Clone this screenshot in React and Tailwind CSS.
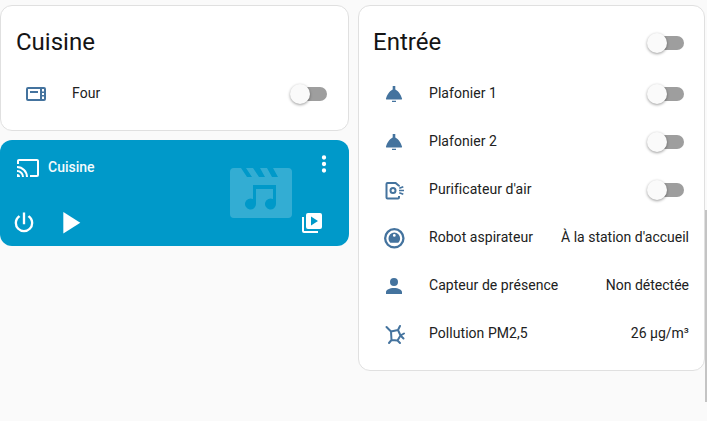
import React from 'react';

const font = { fontFamily: 'Roboto, sans-serif' };

// mdi style icon wrapper
const Icon = ({ d, size = 24, viewBox = '0 0 24 24', height, className = '' }) => (
  <svg width={size} height={height || size} viewBox={viewBox} className={className} fill="currentColor">
    <path d={d} fillRule="evenodd" />
  </svg>
);

const Molecule = () => (
  <svg width="24" height="24" viewBox="0 0 24 24" fill="none" stroke="currentColor" strokeWidth="2" strokeLinecap="round" strokeLinejoin="round">
    <path d="M9 9.5L16 8L18.5 13.5L15.5 18.5L9.5 18ZM9 9.5L4.5 5M16 8L18 4M18.5 13.5L22 11.5M18.5 13.5L21.5 16.5M15.5 18.5L18 21M9.5 18L7 21" />
  </svg>
);

const paths = {
  oven: 'M4 5H20A2 2 0 0 1 22 7V17A2 2 0 0 1 20 19H4A2 2 0 0 1 2 17V7A2 2 0 0 1 4 5M4 7V17H16V7H4M18 7V9.5H20V7H18M18 11V13H20V11H18M18 14.5V17H20V14.5H18M6 9H14V11H6V9Z',
  light: 'M10.7 4H13.3V7.5C16.5 9 19 13 20 16.5C20.2 17.2 19.8 17.5 19.3 17.5H4.7C4.2 17.5 3.8 17.2 4 16.5C5 13 7.5 9 10.7 7.5V4M10 18.7H14V20H10V18.7Z',
  purifier: 'M5.5 4H14L18 7.5V8.5H16V8.3L13.2 6H5.5V19.5H16V18H18V19.5A2 2 0 0 1 16 21.5H5.5A2 2 0 0 1 3.5 19.5V6A2 2 0 0 1 5.5 4M11 9A3.5 3.5 0 1 1 11 16A3.5 3.5 0 1 1 11 9M11 11A1.5 1.5 0 1 0 11 14A1.5 1.5 0 1 0 11 11M17 9.5L21 8L21.6 9.5L17.6 11L17 9.5M17 11.7H22V13.3H17V11.7M17.6 14L21.6 15.5L21 17L17 15.5L17.6 14Z',
  robot: 'M12.3 2A10.3 10.3 0 0 1 22.6 12.3A10.3 10.3 0 0 1 2 12.3A10.3 10.3 0 0 1 12.3 2M12.3 4.3A8 8 0 0 0 4.3 12.3A8 8 0 0 0 20.3 12.3A8 8 0 0 0 12.3 4.3M12.3 6.5A5.8 5.8 0 0 1 18.1 12.3C18.1 14 17.5 15.6 16.3 16.8H8.3C7.1 15.6 6.5 14 6.5 12.3A5.8 5.8 0 0 1 12.3 6.5M12.3 8A1.4 1.4 0 1 0 12.3 10.8A1.4 1.4 0 1 0 12.3 8Z',
  person: 'M12,4A4,4 0 0,1 16,8A4,4 0 0,1 12,12A4,4 0 0,1 8,8A4,4 0 0,1 12,4M12,14C16.42,14 20,15.79 20,18V20H4V18C4,15.79 7.58,14 12,14Z',
  cast: 'M1,10V12A9,9 0 0,1 10,21H12C12,14.92 7.07,10 1,10M1,14V16A5,5 0 0,1 6,21H8A7,7 0 0,0 1,14M1,18V21H4A3,3 0 0,0 1,18M21,3H3C1.89,3 1,3.89 1,5V8H3V5H21V19H14V21H21A2,2 0 0,0 23,19V5C23,3.89 22.1,3 21,3Z',
  dots: 'M12,16A2,2 0 0,1 14,18A2,2 0 0,1 12,20A2,2 0 0,1 10,18A2,2 0 0,1 12,16M12,10A2,2 0 0,1 14,12A2,2 0 0,1 12,14A2,2 0 0,1 10,12A2,2 0 0,1 12,10M12,4A2,2 0 0,1 14,6A2,2 0 0,1 12,8A2,2 0 0,1 10,6A2,2 0 0,1 12,4Z',
  power: 'M16.56,5.44L15.11,6.89C16.84,7.94 18,9.83 18,12A6,6 0 0,1 12,18A6,6 0 0,1 6,12C6,9.83 7.16,7.94 8.88,6.88L7.44,5.44C5.36,6.88 4,9.28 4,12A8,8 0 0,0 12,20A8,8 0 0,0 20,12C20,9.28 18.64,6.88 16.56,5.44M13,3H11V13H13V3Z',
  play: 'M8,5.14V19.14L19,12.14L8,5.14Z',
  playlist: 'M4 6H2V20A2 2 0 0 0 4 22H18V20H4V6M20 2H8A2 2 0 0 0 6 4V16A2 2 0 0 0 8 18H20A2 2 0 0 0 22 16V4A2 2 0 0 0 20 2M11 5.5L18 10L11 14.5V5.5Z',
  clapper: 'M4 0H11L17 9H22L16 0H23L29 9H35L30 0H37L42 9H48L43 0H58A4 4 0 0 1 62 4V46A4 4 0 0 1 58 50H4A4 4 0 0 1 0 46V4A4 4 0 0 1 4 0ZM23 17H46V36A5.5 5.5 0 1 1 43 31.1V21H26V36A5.5 5.5 0 1 1 23 31.1Z',
};

const Toggle = () => (
  <div className="relative w-[34px] h-[14px] rounded-full bg-[#9e9e9e] shrink-0">
    <div className="absolute left-[-3px] top-[-3px] w-5 h-5 rounded-full bg-[#fafafa] shadow-[0_1px_3px_rgba(0,0,0,0.4)]" />
  </div>
);

const Row = ({ icon, glyph, name, value, nameGap = 'ml-4', togglePad = 'pr-[5px]' }) => (
  <div className="flex items-center h-12">
    <div className="w-10 flex justify-center text-[#44739e] shrink-0">
      {glyph || <Icon d={icon} />}
    </div>
    <div className={`${nameGap} flex-1 text-sm tracking-[0.05px] text-[#212121] pb-[3px] whitespace-nowrap`}>{name}</div>
    {value
      ? <div className="text-sm text-[#212121] pb-[3px] whitespace-nowrap">{value}</div>
      : <div className={togglePad}><Toggle /></div>}
  </div>
);

const Card = ({ title, toggle, titlePad = 'pl-[15px]', className = '', children }) => (
  <div className={`bg-white border border-[#e0e0e0] rounded-xl ${className}`}>
    <div className={`flex items-center justify-between h-[63px] pt-[8px] ${titlePad} pr-[20px]`}>
      <div className="text-2xl text-[#141414]">{title}</div>
      {toggle && <div className="mt-[2px]"><Toggle /></div>}
    </div>
    <div className="px-[15px] mt-[1px]">{children}</div>
  </div>
);

export default function App() {
  return (
    <div className="relative min-h-screen bg-[#fafafa] overflow-hidden" style={font}>
      <div className="flex items-start gap-[9px] pt-[5px]">
        <div className="w-[349px] flex flex-col gap-[9px]">
          <Card title="Cuisine" className="h-[126px]">
            <Row icon={paths.oven} name="Four" togglePad="pr-[6px]" />
          </Card>

          <div className="relative h-[106px] rounded-xl bg-[#0099c9] text-white">
            <Icon d={paths.clapper} size={62} height={50} viewBox="0 0 62 50" className="absolute left-[230px] top-[28px] text-white opacity-20" />
            <div className="flex items-center justify-between pl-[16px] pr-[12px] pt-[16px]">
              <div className="flex items-center gap-[8px]">
                <Icon d={paths.cast} />
                <span className="text-sm font-medium text-[#f4fbfd] pb-[2px]">Cuisine</span>
              </div>
              <Icon d={paths.dots} size={26} className="mt-[-8px]" />
            </div>
            <div className="absolute left-[10px] right-[25px] bottom-[5px] flex items-center">
              <Icon d={paths.power} size={28} />
              <Icon d={paths.play} size={37} className="ml-[13px]" />
              <Icon d={paths.playlist} size={24} className="ml-auto" />
            </div>
          </div>
        </div>

        <Card title="Entrée" toggle titlePad="pl-[14px]" className="w-[347px] h-[366px]">
          <Row icon={paths.light} name="Plafonier 1" nameGap="ml-[15px]" />
          <Row icon={paths.light} name="Plafonier 2" nameGap="ml-[15px]" />
          <Row icon={paths.purifier} name="Purificateur d'air" nameGap="ml-[15px]" />
          <Row icon={paths.robot} name="Robot aspirateur" value="À la station d'accueil" nameGap="ml-[15px]" />
          <Row icon={paths.person} name="Capteur de présence" value="Non détectée" nameGap="ml-[15px]" />
          <Row glyph={<Molecule />} name="Pollution PM2,5" value="26 µg/m³" nameGap="ml-[15px]" />
        </Card>
      </div>
      <div className="absolute right-0 top-[210px] w-[2px] h-[192px] bg-[#c4c4c4]" />
    </div>
  );
}
